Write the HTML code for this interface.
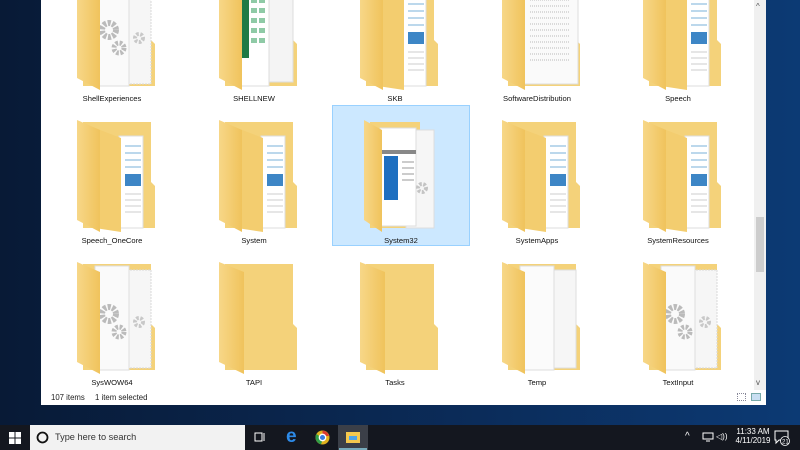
<!DOCTYPE html>
<html><head><meta charset="utf-8"><style>
*{margin:0;padding:0;box-sizing:border-box}
body{width:800px;height:450px;overflow:hidden;position:relative;background:linear-gradient(90deg,#081a36 0%,#0b2c5a 60%,#0c3a74 100%);font-family:"Liberation Sans",sans-serif}
.win{position:absolute;left:41px;top:0;width:725px;height:405px;background:#fff;overflow:hidden}
.sb{position:absolute;left:713px;top:0;width:12px;height:390px;background:#f0f0f0}
.thumb{position:absolute;left:715px;top:217px;width:8px;height:55px;background:#cdcdcd}
.f{position:absolute;width:80px;height:112px;margin-left:5px}
.lbl{position:absolute;width:140px;text-align:center;font-size:7.6px;color:#111}
.sel{position:absolute;left:291px;top:105px;width:138px;height:141px;background:#cce8ff;border:1px solid #99d1ff}
.st{position:absolute;top:393px;font-size:7.8px;color:#222}
.tb{position:absolute;left:0;top:425px;width:800px;height:25px;background:#14171f}
.search{position:absolute;left:30px;top:425px;width:215px;height:25px;background:#f2f2f2}
.search span{position:absolute;left:25px;top:7px;font-size:9.2px;color:#333}
.clk{position:absolute;color:#fff;font-size:8px;text-align:center}
</style></head><body>
<svg width="0" height="0" style="position:absolute">
<defs>
<linearGradient id="lg" x1="0" x2="1"><stop offset="0" stop-color="#f7d788"/><stop offset="1" stop-color="#f0c35c"/></linearGradient>
<symbol id="back" viewBox="0 0 80 112"><path d="M6 2H74V62L78 66V108H6Z" fill="#f4d27a"/></symbol>
<symbol id="leaf" viewBox="0 0 80 112"><path d="M0 0L23 10V112L0 100Z" fill="url(#lg)"/></symbol>
<symbol id="gears" viewBox="0 0 80 112"><rect x="44" y="8" width="30" height="98" fill="#f6f6f6" stroke="#d8d8d8" stroke-dasharray="2 1"/><rect x="18" y="4" width="34" height="104" fill="#fafafa" stroke="#ddd"/><circle cx="32" cy="52" r="7" fill="none" stroke="#bbb" stroke-width="6" stroke-dasharray="3 1.5"/><circle cx="42" cy="70" r="5" fill="none" stroke="#bbb" stroke-width="5" stroke-dasharray="2.5 1.5"/><circle cx="62" cy="60" r="4" fill="none" stroke="#c8c8c8" stroke-width="4" stroke-dasharray="2.5 1.5"/></symbol>
<symbol id="doc" viewBox="0 0 80 112"><rect x="42" y="16" width="24" height="92" fill="#fff" stroke="#ddd"/><g stroke="#7ab0d8" stroke-width="1"><path d="M48 26H64M48 33H64M48 40H64M48 47H64"/></g><rect x="48" y="54" width="16" height="12" fill="#3d86c6"/><g stroke="#ccc"><path d="M48 74H64M48 80H64M48 86H64M48 92H64"/></g><path d="M18 8L44 18V112L18 108Z" fill="#f3cd6f"/></symbol>
</defs></svg>
<div class="win">
<div class="sel"></div>
<svg class="f" style="left:31px;top:-22px"><use href="#back"/><use href="#gears"/><use href="#leaf"/></svg>
<svg class="f" style="left:173px;top:-22px"><use href="#back"/><rect x="46" y="6" width="28" height="98" fill="#f4f4f4" stroke="#ddd"/><rect x="18" y="2" width="32" height="106" fill="#fff" stroke="#ddd"/><rect x="22" y="20" width="8" height="60" fill="#1e7a45"/><g fill="#8fcaa6"><rect x="32" y="10" width="6" height="5"/><rect x="40" y="10" width="6" height="5"/><rect x="32" y="20" width="6" height="5"/><rect x="40" y="20" width="6" height="5"/><rect x="32" y="30" width="6" height="5"/><rect x="40" y="30" width="6" height="5"/><rect x="32" y="40" width="6" height="5"/><rect x="40" y="40" width="6" height="5"/><rect x="32" y="50" width="6" height="5"/><rect x="40" y="50" width="6" height="5"/><rect x="32" y="60" width="6" height="5"/><rect x="40" y="60" width="6" height="5"/></g><use href="#leaf"/></svg>
<svg class="f" style="left:314px;top:-22px"><use href="#back"/><use href="#doc"/><use href="#leaf"/></svg>
<svg class="f" style="left:456px;top:-22px"><use href="#back"/><rect x="18" y="2" width="58" height="104" fill="#fafafa" stroke="#ddd"/><g stroke="#bbb" stroke-dasharray="1 1"><path d="M28 10H68M28 16H68M28 22H68M28 28H68M28 34H68M28 40H68M28 46H68M28 52H68M28 58H68M28 64H68M28 70H68M28 76H68M28 82H68"/></g><use href="#leaf"/></svg>
<svg class="f" style="left:597px;top:-22px"><use href="#back"/><use href="#doc"/><use href="#leaf"/></svg>
<div class="lbl" style="left:1px;top:94px">ShellExperiences</div>
<div class="lbl" style="left:143px;top:94px">SHELLNEW</div>
<div class="lbl" style="left:284px;top:94px">SKB</div>
<div class="lbl" style="left:426px;top:94px">SoftwareDistribution</div>
<div class="lbl" style="left:567px;top:94px">Speech</div>
<svg class="f" style="left:31px;top:120px"><use href="#back"/><use href="#doc"/><use href="#leaf"/></svg>
<svg class="f" style="left:173px;top:120px"><use href="#back"/><use href="#doc"/><use href="#leaf"/></svg>
<svg class="f" style="left:314px;top:120px"><path d="M10 2H60V108H10Z" fill="#f4d27a"/><rect x="46" y="10" width="28" height="98" fill="#f6f6f6" stroke="#ddd"/><rect x="20" y="8" width="36" height="98" fill="#fff" stroke="#ddd"/><rect x="22" y="30" width="34" height="4" fill="#888"/><rect x="24" y="36" width="14" height="44" fill="#1e6fc0"/><g stroke="#999"><path d="M42 42H54M42 48H54M42 54H54M42 60H54"/></g><circle cx="62" cy="68" r="4" fill="none" stroke="#c4c4c4" stroke-width="4" stroke-dasharray="2.5 1.5"/><path d="M4 0L22 10V112L4 100Z" fill="url(#lg)"/></svg>
<svg class="f" style="left:456px;top:120px"><use href="#back"/><use href="#doc"/><use href="#leaf"/></svg>
<svg class="f" style="left:597px;top:120px"><use href="#back"/><use href="#doc"/><use href="#leaf"/></svg>
<div class="lbl" style="left:1px;top:236px">Speech_OneCore</div>
<div class="lbl" style="left:143px;top:236px">System</div>
<div class="lbl" style="left:290px;top:236px">System32</div>
<div class="lbl" style="left:426px;top:236px">SystemApps</div>
<div class="lbl" style="left:567px;top:236px">SystemResources</div>
<svg class="f" style="left:31px;top:262px"><use href="#back"/><use href="#gears"/><use href="#leaf"/></svg>
<svg class="f" style="left:173px;top:262px"><use href="#back"/><path d="M0 0L25 10V112L0 100Z" fill="url(#lg)"/></svg>
<svg class="f" style="left:314px;top:262px"><use href="#back"/><path d="M0 0L25 10V112L0 100Z" fill="url(#lg)"/></svg>
<svg class="f" style="left:456px;top:262px"><use href="#back"/><rect x="44" y="8" width="30" height="98" fill="#f6f6f6" stroke="#ddd"/><rect x="18" y="4" width="34" height="104" fill="#fbfbfb" stroke="#ddd"/><use href="#leaf"/></svg>
<svg class="f" style="left:597px;top:262px"><use href="#back"/><use href="#gears"/><use href="#leaf"/></svg>
<div class="lbl" style="left:1px;top:378px">SysWOW64</div>
<div class="lbl" style="left:143px;top:378px">TAPI</div>
<div class="lbl" style="left:284px;top:378px">Tasks</div>
<div class="lbl" style="left:426px;top:378px">Temp</div>
<div class="lbl" style="left:567px;top:378px">TextInput</div>
<div class="sb"></div><div class="thumb"></div>
<div style="position:absolute;left:715px;top:2px;font-size:8px;color:#555">^</div>
<div style="position:absolute;left:715px;top:378px;font-size:8px;color:#555">v</div>
<div class="st" style="left:10px">107 items</div>
<div class="st" style="left:54px">1 item selected</div>
<div style="position:absolute;left:696px;top:393px;width:9px;height:8px;border:1px dotted #889"></div>
<div style="position:absolute;left:710px;top:393px;width:10px;height:8px;background:#c9dff2;border:1px solid #7aa"></div>
</div>
<div class="tb"></div>
<svg style="position:absolute;left:9px;top:432px" width="12" height="12"><g fill="#fff"><rect x="0" y="0" width="5.5" height="5.5"/><rect x="6.5" y="0" width="5.5" height="5.5"/><rect x="0" y="6.5" width="5.5" height="5.5"/><rect x="6.5" y="6.5" width="5.5" height="5.5"/></g></svg>
<div class="search"><svg style="position:absolute;left:6px;top:6px" width="13" height="13"><circle cx="6.5" cy="6.5" r="5" fill="none" stroke="#111" stroke-width="1.8"/></svg><span>Type here to search</span></div>
<svg style="position:absolute;left:254px;top:431px" width="12" height="12"><rect x="1" y="2" width="7" height="8" fill="none" stroke="#fff"/><path d="M10 2V10" stroke="#fff"/></svg>
<div style="position:absolute;left:286px;top:427px;color:#2d8ae8;font-size:19px;font-weight:bold;line-height:20px">e</div>
<svg style="position:absolute;left:315px;top:430px" width="15" height="15"><circle cx="7.5" cy="7.5" r="7" fill="#e0b21e"/><path d="M7.5 0.5A7 7 0 0 1 14 6H7.5Z" fill="#d93b30"/><path d="M1.5 4A7 7 0 0 0 6 14.3L8 9Z" fill="#2f9e48"/><circle cx="7.5" cy="7.5" r="3.2" fill="#3a7de0" stroke="#fff" stroke-width="1.3"/></svg>
<div style="position:absolute;left:338px;top:425px;width:30px;height:25px;background:#3b3f48"></div>
<svg style="position:absolute;left:346px;top:431px" width="14" height="12"><rect x="0" y="1" width="14" height="11" fill="#f4c84e"/><rect x="3" y="5" width="8" height="4" fill="#4da3e8"/></svg>
<div style="position:absolute;left:339px;top:448px;width:28px;height:2px;background:#7ab"></div>
<div class="clk" style="left:685px;top:431px;font-size:10px">^</div>
<svg style="position:absolute;left:702px;top:432px" width="12" height="10"><rect x="1" y="1" width="10" height="6" fill="none" stroke="#fff"/><path d="M4 9H8" stroke="#fff"/></svg>
<div class="clk" style="left:716px;top:432px;font-size:8px">◁))</div>
<div class="clk" style="left:728px;top:427px;width:50px">11:33 AM<br>4/11/2019</div>
<svg style="position:absolute;left:774px;top:430px" width="16" height="16"><path d="M1 1H14V10H5L2 13V10H1Z" fill="none" stroke="#fff"/><circle cx="11" cy="11" r="4.5" fill="#14171f" stroke="#fff" stroke-width=".8"/><text x="8" y="13.5" font-size="6" fill="#fff" font-family="Liberation Sans">21</text></svg>
</body></html>
